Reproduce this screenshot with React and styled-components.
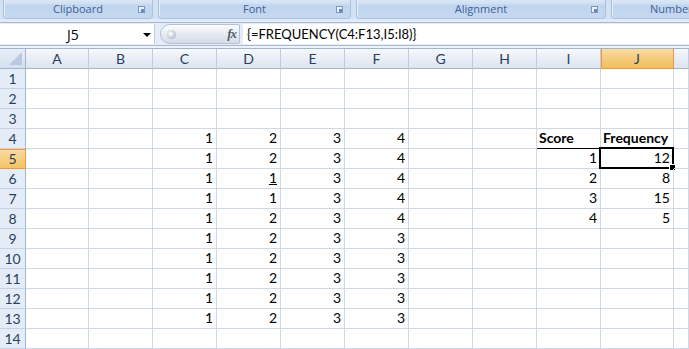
import React from "react";
import styled, { createGlobalStyle } from "styled-components";

const GlobalStyle = createGlobalStyle`
  html, body {
    margin: 0;
    padding: 0;
    background: #fff;
  }
  body {
    width: 689px;
    height: 349px;
    overflow: hidden;
    font-family: Lato, "Liberation Sans", sans-serif;
  }
`;

const Window = styled.div`
  display: flex;
  flex-direction: column;
  width: 689px;
  height: 349px;
  overflow: hidden;
`;

/* ---------- ribbon ---------- */

const Ribbon = styled.div`
  display: flex;
  gap: 5px;
  height: 21px;
  padding-left: 3px;
  background: #d3e1f3;
  overflow: hidden;
`;

const Group = styled.div`
  position: relative;
  flex: 0 0 ${(p) => p.$w}px;
  display: flex;
  align-items: flex-end;
  justify-content: ${(p) => (p.$start ? "flex-start" : "center")};
  padding-left: ${(p) => (p.$start ? "38px" : "0")};
  box-sizing: border-box;
  border: 1px solid #a9c1e0;
  border-top: none;
  border-radius: 0 0 4px 4px;
  background: linear-gradient(#dbe7f5 0%, #d0e0f3 20%, #c1d5ee 30%, #c4d8f0 100%);
  box-shadow: inset 1px 0 0 #e6eef9;
`;

const GroupLabel = styled.span`
  font: 400 11px/17px "Open Sans", "DejaVu Sans", sans-serif;
  color: #3e6296;
  padding-bottom: 1px;
  white-space: nowrap;
`;

const Launcher = styled.span`
  position: absolute;
  right: 7px;
  bottom: 5px;
  width: 7px;
  height: 7px;
  box-sizing: border-box;
  border: 1px solid #7a97c2;
  background: #e9f0f9;

  &::after {
    content: "";
    position: absolute;
    right: 0;
    bottom: 0;
    width: 3px;
    height: 3px;
    background: #6b88b6;
  }
`;

const RibbonFoot = styled.div`
  height: 4px;
  background: #e1eaf6;
  border-bottom: 1px solid #a4bcdc;
`;

/* ---------- formula bar ---------- */

const FormulaBar = styled.div`
  display: flex;
  align-items: center;
  height: 22px;
  padding: 1px 0;
  background: #e4ecf7;
  border-bottom: 1px solid #a8bad4;
`;

const NameBox = styled.div`
  position: relative;
  flex: 0 0 155px;
  height: 20px;
  box-sizing: border-box;
  background: #fff;
  border-right: 1px solid #c1cfe3;
  display: flex;
  align-items: center;
  justify-content: center;
  padding-right: 8px;
  font: 400 14px "Open Sans", Lato, sans-serif;
  color: #000;

  &::after {
    content: "";
    position: absolute;
    right: 3px;
    top: 9px;
    border-left: 4px solid transparent;
    border-right: 4px solid transparent;
    border-top: 4px solid #000;
  }
`;

const FxButton = styled.div`
  position: relative;
  flex: 0 0 80px;
  height: 20px;
  margin: 0 3px 0 5px;
  box-sizing: border-box;
  border: 1px solid #b3c2d8;
  border-radius: 10px 2px 2px 10px;
  background: linear-gradient(#fbfcfe, #e4e9f1 55%, #d6dde8);
  display: flex;
  align-items: center;
  justify-content: space-between;
  padding: 0 3px 0 6px;
`;

const Knob = styled.span`
  width: 9px;
  height: 9px;
  border-radius: 50%;
  background: radial-gradient(circle at 40% 40%, #ffffff, #b8c0cc 70%, #9aa4b2);
`;

const Fx = styled.span`
  font: italic 700 13px "Liberation Serif", serif;
  color: #555e6b;
  letter-spacing: -1px;
`;

const FormulaInput = styled.div`
  flex: 1;
  height: 20px;
  background: #fff;
  display: flex;
  align-items: center;
  padding-left: 4px;
  font: 400 13px Lato, "Liberation Sans", sans-serif;
  color: #000;
  white-space: nowrap;
`;

const Spacer = styled.div`
  height: 2px;
  background: #eef3fa;
`;

/* ---------- sheet grid ---------- */

const COLS = ["A", "B", "C", "D", "E", "F", "G", "H", "I", "J", "K"];

const Sheet = styled.div`
  display: grid;
  grid-template-columns: 26px 63px 64px 64px 64px 64px 64px 64px 64px 64px 73px 1fr;
  grid-auto-rows: 20px;
  border-top: 1px solid #9eb6ce;
`;

const Corner = styled.div`
  position: relative;
  box-sizing: border-box;
  background: linear-gradient(#e8eef7, #d5e0ef);
  border-right: 1px solid #9eb6ce;
  border-bottom: 1px solid #9eb6ce;

  &::after {
    content: "";
    position: absolute;
    right: 3px;
    bottom: 3px;
    border-left: 13px solid transparent;
    border-bottom: 13px solid #b8c9e0;
  }
`;

const ColHead = styled.div`
  box-sizing: border-box;
  display: flex;
  align-items: center;
  justify-content: center;
  font: 400 14px Lato, sans-serif;
  color: #2a3f5d;
  background: ${(p) =>
    p.$active
      ? "linear-gradient(#f9dba3, #f4c875 60%, #f1c05e)"
      : "linear-gradient(#f7f9fc, #e6ecf5 60%, #dde5f0)"};
  border-right: 1px solid ${(p) => (p.$active ? "#f29536" : "#c0cde0")};
  border-bottom: 1px solid ${(p) => (p.$active ? "#f29536" : "#9eb6ce")};
  ${(p) => p.$active && "box-shadow: inset 1px 0 0 #f29536;"}
`;

const RowHead = styled.div`
  box-sizing: border-box;
  display: flex;
  align-items: center;
  justify-content: center;
  font: 400 14px Lato, sans-serif;
  color: #2a3f5d;
  background: ${(p) => (p.$active ? "linear-gradient(#f9dba3, #f2c466)" : "#e4ecf7")};
  border-right: 1px solid ${(p) => (p.$active ? "#f29536" : "#9eb6ce")};
  border-bottom: 1px solid ${(p) => (p.$active ? "#f29536" : "#c5d2e3")};
  ${(p) => p.$active && "box-shadow: inset 0 1px 0 #f29536;"}
`;

const Cell = styled.div`
  position: relative;
  box-sizing: border-box;
  display: flex;
  align-items: flex-end;
  justify-content: ${(p) => (p.$left ? "flex-start" : "flex-end")};
  padding: 0 3px 1px 2px;
  font: ${(p) => (p.$bold ? 700 : 400)} 14px/18px Lato, "Liberation Sans", sans-serif;
  color: #000;
  border-right: 1px solid #d0d7e5;
  border-bottom: 1px solid ${(p) => (p.$ruled ? "#000" : "#d0d7e5")};
  text-decoration: ${(p) => (p.$under ? "underline" : "none")};
  white-space: nowrap;
`;

const Selection = styled.span`
  position: absolute;
  left: -2px;
  top: -2px;
  right: -1px;
  bottom: -1px;
  border: 2px solid #000;
  pointer-events: none;

  &::after {
    content: "";
    position: absolute;
    right: -4px;
    bottom: -4px;
    width: 5px;
    height: 5px;
    background: #000;
    border: 1px solid #fff;
  }
`;

const data = {
  4: { C: 1, D: 2, E: 3, F: 4, I: "Score", J: "Frequency" },
  5: { C: 1, D: 2, E: 3, F: 4, I: 1, J: 12 },
  6: { C: 1, D: 1, E: 3, F: 4, I: 2, J: 8 },
  7: { C: 1, D: 1, E: 3, F: 4, I: 3, J: 15 },
  8: { C: 1, D: 2, E: 3, F: 4, I: 4, J: 5 },
  9: { C: 1, D: 2, E: 3, F: 3 },
  10: { C: 1, D: 2, E: 3, F: 3 },
  11: { C: 1, D: 2, E: 3, F: 3 },
  12: { C: 1, D: 2, E: 3, F: 3 },
  13: { C: 1, D: 2, E: 3, F: 3 },
};

const rows = Array.from({ length: 14 }, (_, i) => i + 1);

function App() {
  return (
    <Window>
      <GlobalStyle />
      <Ribbon>
        <Group $w={150}>
          <GroupLabel>Clipboard</GroupLabel>
          <Launcher />
        </Group>
        <Group $w={193}>
          <GroupLabel>Font</GroupLabel>
          <Launcher />
        </Group>
        <Group $w={250}>
          <GroupLabel>Alignment</GroupLabel>
          <Launcher />
        </Group>
        <Group $w={120} $start>
          <GroupLabel>Number</GroupLabel>
        </Group>
      </Ribbon>
      <RibbonFoot />
      <FormulaBar>
        <NameBox>J5</NameBox>
        <FxButton>
          <Knob />
          <Fx>fx</Fx>
        </FxButton>
        <FormulaInput>{"{=FREQUENCY(C4:F13,I5:I8)}"}</FormulaInput>
      </FormulaBar>
      <Spacer />
      <Sheet>
        <Corner />
        {COLS.map((c) => (
          <ColHead key={c} $active={c === "J"}>
            {c === "K" ? null : c}
          </ColHead>
        ))}
        {rows.map((r) => (
          <React.Fragment key={r}>
            <RowHead $active={r === 5}>{r}</RowHead>
            {COLS.map((c) => {
              const v = data[r] && data[r][c];
              const isHead = r === 4 && (c === "I" || c === "J");
              return (
                <Cell
                  key={c}
                  $left={isHead}
                  $bold={isHead}
                  $ruled={isHead}
                  $under={r === 6 && c === "D"}
                >
                  {v}
                  {r === 5 && c === "J" && <Selection />}
                </Cell>
              );
            })}
          </React.Fragment>
        ))}
      </Sheet>
    </Window>
  );
}

export default App;
